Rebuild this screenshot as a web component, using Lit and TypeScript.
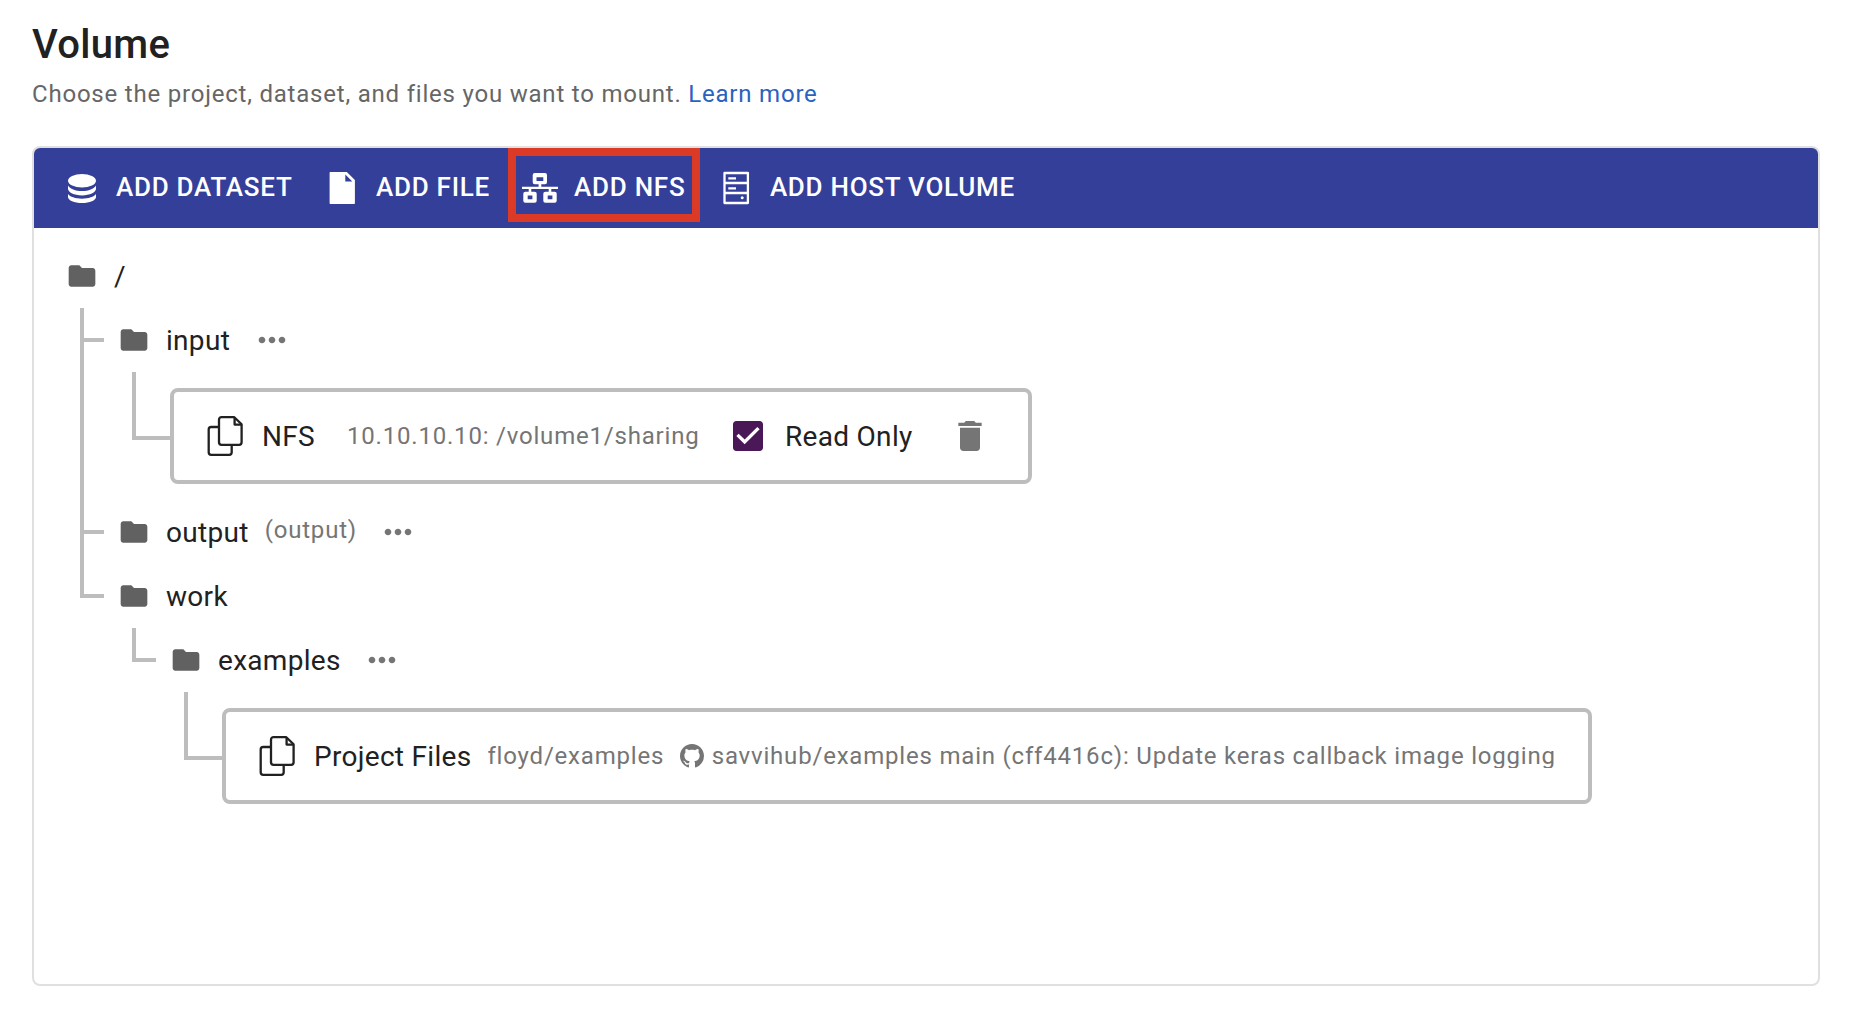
import { LitElement, html, css, svg, nothing, type TemplateResult } from "lit";
import { customElement } from "lit/decorators.js";
import { classMap } from "lit/directives/class-map.js";

interface FileCard {
  kind: "card";
  body: TemplateResult;
}
interface Folder {
  kind: "folder";
  name: string;
  note?: string;
  menu?: boolean;
  children?: TreeNode[];
}
type TreeNode = FileCard | Folder;

const datasetIcon = svg`<svg class="tool-icon" viewBox="0 0 36 36"><ellipse cx="18" cy="10.7" rx="14" ry="6.8"/><path d="M4 15.4C6 18.9 11.4 21 18 21s12-2.1 14-5.6v3.4c0 3.7-6.3 6.6-14 6.6S4 22.5 4 18.8z"/><path d="M4 24.1C6 26.9 11.4 28.7 18 28.7s12-1.8 14-4.6v3c0 3.4-6.3 6-14 6s-14-2.6-14-6z"/></svg>`;

const fileIcon = svg`<svg class="tool-icon" viewBox="0 0 36 36"><path fill-rule="evenodd" d="M6.3 2H22.8L30.9 10V33.2a.7.7 0 0 1-.7.7H6.3a.7.7 0 0 1-.7-.7V2.7a.7.7 0 0 1 .7-.7zM21.3 4.600V11.600H28.300z"/></svg>`;

const nfsIcon = svg`<svg class="tool-icon" viewBox="0 0 36 36"><path fill-rule="evenodd" d="M12.700 3H23a2 2 0 0 1 2 2v7.300a2 2 0 0 1-2 2H12.700a2 2 0 0 1-2-2V5a2 2 0 0 1 2-2zM14.500 7.300V11h6.800V7.300z"/><path d="M16.600 14h2.700v3h-2.700zM0 16.700h36v2.300H0zM6.700 18.500h2.600v3.500H6.700zM26.700 18.500h2.600v3.500h-2.600z"/><path fill-rule="evenodd" d="M3.300 21.700h9.400a2 2 0 0 1 2 2v7a2 2 0 0 1-2 2H3.300a2 2 0 0 1-2-2v-7a2 2 0 0 1 2-2zM5.700 25.500V29.200h4.700V25.500zM23.300 21.700h9.400a2 2 0 0 1 2 2v7a2 2 0 0 1-2 2h-9.400a2 2 0 0 1-2-2v-7a2 2 0 0 1 2-2zM25.700 25.500V29.200h4.700V25.500z"/></svg>`;

const hostIcon = svg`<svg class="tool-icon" viewBox="0 0 36 36"><path fill="none" stroke="currentColor" stroke-width="2.3" stroke-linejoin="round" d="M6.500 3H29.900V33H6.500zM6.500 13H29.900M6.500 23H29.900"/><path d="M10.300 7.200h7.700v2.200h-7.700zM10.300 17.200h7.700v2.200h-7.700z"/><circle cx="24.200" cy="27.800" r="1.500"/></svg>`;

const folderIcon = svg`<svg class="folder-icon" viewBox="0 0 24 24"><path d="M10 4H4c-1.100 0-1.990.9-1.990 2L2 18c0 1.100.9 2 2 2h16c1.100 0 2-.9 2-2V8c0-1.100-.9-2-2-2h-8l-2-2z"/></svg>`;

const moreIcon = svg`<svg class="glyph" viewBox="0 0 24 24"><path d="M6 10c-1.100 0-2 .9-2 2s.9 2 2 2 2-.9 2-2-.9-2-2-2zm12 0c-1.100 0-2 .9-2 2s.9 2 2 2 2-.9 2-2-.9-2-2-2zm-6 0c-1.100 0-2 .9-2 2s.9 2 2 2 2-.9 2-2-.9-2-2-2z"/></svg>`;

const copyIcon = svg`<svg class="copy-icon" viewBox="0 0 36 40"><g fill="none" stroke="currentColor" stroke-width="2.3" stroke-linejoin="round"><path d="M11.500 11H4.200a2.500 2.500 0 0 0-2.500 2.500V36.300a2.500 2.500 0 0 0 2.500 2.500H22.200a2.500 2.500 0 0 0 2.500-2.500V29.500"/><path d="M14.500 1.200H27.300L34.600 8.300V26.300a2.500 2.500 0 0 1-2.500 2.500H14.500a2.500 2.500 0 0 1-2.500-2.500V3.700A2.500 2.500 0 0 1 14.500 1.200z"/><path d="M27.600 1.800V8.600H34.200"/></g></svg>`;

const checkIcon = svg`<svg class="check" viewBox="0 0 24 24"><path d="M19 3H5c-1.110 0-2 .9-2 2v14c0 1.100.89 2 2 2h14c1.110 0 2-.9 2-2V5c0-1.100-.89-2-2-2zm-9 14l-5-5 1.410-1.410L10 14.170l7.590-7.590L19 8l-9 9z"/></svg>`;

const trashIcon = svg`<svg class="glyph" viewBox="0 0 24 24"><path d="M6 19c0 1.100.9 2 2 2h8c1.100 0 2-.9 2-2V7H6v12zM19 4h-3.500l-1-1h-5l-1 1H5v2h14V4z"/></svg>`;

const githubIcon = svg`<svg class="github" viewBox="0 0 16 16"><path d="M8 0C3.580 0 0 3.580 0 8c0 3.540 2.290 6.530 5.470 7.590.4.070.55-.17.55-.38 0-.19-.01-.82-.01-1.490-2.010.37-2.530-.49-2.690-.94-.09-.23-.48-.94-.82-1.130-.28-.15-.68-.52-.01-.53.63-.01 1.080.58 1.230.82.72 1.210 1.870.87 2.330.66.07-.52.28-.87.51-1.070-1.780-.2-3.640-.89-3.640-3.950 0-.87.31-1.590.82-2.150-.08-.2-.36-1.020.08-2.120 0 0 .67-.21 2.200.82.64-.18 1.320-.27 2-.27s1.360.09 2 .27c1.530-1.040 2.200-.82 2.200-.82.44 1.100.16 1.920.08 2.120.51.56.82 1.270.82 2.150 0 3.070-1.870 3.750-3.650 3.950.29.25.54.73.54 1.480 0 1.070-.01 1.930-.01 2.200 0 .21.15.46.55.38A8.013 8.013 0 0 0 16 8c0-4.420-3.580-8-8-8z"/></svg>`;

const actions = [
  { label: "ADD DATASET", icon: datasetIcon },
  { label: "ADD FILE", icon: fileIcon },
  { label: "ADD NFS", icon: nfsIcon, marked: true },
  { label: "ADD HOST VOLUME", icon: hostIcon },
];

const nfsCard: FileCard = {
  kind: "card",
  body: html`
    ${copyIcon}
    <span class="body">NFS</span>
    <span class="caption address">10.10.10.10: /volume1/sharing</span>
    ${checkIcon}
    <span class="body read-only">Read Only</span>
    <span class="delete">${trashIcon}</span>
  `,
};

const projectCard: FileCard = {
  kind: "card",
  body: html`
    ${copyIcon}
    <span class="body">Project Files</span>
    <span class="caption source">floyd/examples</span>
    ${githubIcon}
    <span class="caption">savvihub/examples main (cff4416c): </span>
    <span class="caption message">Update keras callback image logging</span>
  `,
};

const root: Folder = {
  kind: "folder",
  name: "/",
  children: [
    { kind: "folder", name: "input", menu: true, children: [nfsCard] },
    { kind: "folder", name: "output", note: "(output)", menu: true },
    {
      kind: "folder",
      name: "work",
      children: [{ kind: "folder", name: "examples", menu: true, children: [projectCard] }],
    },
  ],
};

@customElement("app-root")
export class AppRoot extends LitElement {
  static styles = css`
    :host {
      display: block;
      box-sizing: border-box;
      height: 1012px;
      padding: 16px 34px 26px 32px;
      background: #fff;
      color: #212121;
      font-family: Roboto, "Liberation Sans", sans-serif;
    }
    * {
      box-sizing: border-box;
    }
    svg {
      display: block;
      flex: none;
      fill: currentColor;
    }
    .title {
      margin: 0;
      font-size: 40px;
      font-weight: 500;
      line-height: 58px;
      letter-spacing: 0.3px;
    }
    .subtitle {
      margin: 0 0 32px;
      font-size: 24px;
      line-height: 40px;
      letter-spacing: 0.79px;
      color: #666;
    }
    .link {
      color: #2962bf;
      text-decoration: none;
    }
    .panel {
      height: 840px;
      border: 2px solid #e0e0e0;
      border-radius: 8px;
      overflow: hidden;
    }
    .toolbar {
      display: flex;
      gap: 32px;
      height: 80px;
      padding-left: 30px;
      background: #343f99;
      color: #fff;
    }
    .action {
      position: relative;
      display: flex;
      align-items: center;
      gap: 16px;
      font-size: 26px;
      font-weight: 500;
      line-height: 40px;
      letter-spacing: 0.743px;
      white-space: nowrap;
    }
    .action:first-child {
      margin-right: -0.6px;
    }
    .action:nth-child(3) {
      margin-right: 0.5px;
    }
    .action-label {
      padding-bottom: 2px;
    }
    .marker {
      position: absolute;
      left: -14px;
      top: 0;
      width: 192px;
      height: 74px;
      border: 8px solid #db3b26;
    }
    .tool-icon {
      width: 36px;
      height: 36px;
    }
    .tree {
      padding: 16px 32px;
    }
    .row {
      display: flex;
      align-items: center;
      height: 64px;
    }
    .folder-icon {
      width: 32px;
      height: 32px;
      margin-right: 16px;
      color: #616161;
    }
    .body {
      padding-top: 2px;
      font-size: 28px;
      line-height: 40px;
      letter-spacing: 0.3px;
      white-space: nowrap;
    }
    .caption {
      font-size: 24px;
      line-height: 40px;
      letter-spacing: 0.8px;
      white-space: pre;
      color: #757575;
    }
    .note {
      margin: 0 -0.8px 0 16px;
      padding-bottom: 5px;
    }
    .glyph {
      width: 40px;
      height: 40px;
      color: #757575;
    }
    .menu {
      margin-left: 21.5px;
    }
    .children {
      padding-left: 14px;
    }
    .child {
      display: flex;
    }
    .rail {
      display: flex;
      flex-direction: column;
      flex: none;
      width: 24px;
      margin-right: 14px;
    }
    .elbow {
      flex: none;
      height: 34px;
      border-left: 4px solid #bdbdbd;
      border-bottom: 4px solid #bdbdbd;
    }
    .stem {
      flex: 1;
      border-left: 4px solid #bdbdbd;
    }
    .rail-card {
      width: 38px;
      margin-right: 0;
    }
    .rail-card .elbow {
      height: 68px;
    }
    .card {
      display: flex;
      align-items: center;
      height: 96px;
      margin: 16px 0;
      padding-left: 33px;
      padding-right: 32px;
      border: 4px solid #bdbdbd;
      border-radius: 8px;
    }
    .copy-icon {
      width: 36px;
      height: 40px;
      margin-right: 19px;
    }
    .address {
      margin: 0 28.5px 0 32px;
    }
    .check {
      width: 40px;
      height: 40px;
      color: #4a1857;
    }
    .read-only {
      margin: 0 37.5px 0 17px;
    }
    .delete {
      margin-right: 6px;
    }
    .source {
      margin: 0 15.6px 0 16px;
    }
    .github {
      width: 24px;
      height: 24px;
      margin-right: 8px;
      color: #757575;
    }
    .message {
      line-height: 24px;
      overflow: hidden;
    }
  `;

  private renderFolder(folder: Folder): TemplateResult {
    return html`
      <div class="folder">
        <div class="row">
          ${folderIcon}
          <span class="body">${folder.name}</span>
          ${folder.note ? html`<span class="caption note">${folder.note}</span>` : nothing}
          ${folder.menu ? html`<span class="menu">${moreIcon}</span>` : nothing}
        </div>
        ${folder.children
          ? html`<div class="children">
              ${folder.children.map((node, i) => this.renderChild(node, i === folder.children!.length - 1))}
            </div>`
          : nothing}
      </div>
    `;
  }

  private renderChild(node: TreeNode, last: boolean): TemplateResult {
    return html`
      <div class="child">
        <div class=${classMap({ rail: true, "rail-card": node.kind === "card" })}>
          <div class="elbow"></div>
          ${last ? nothing : html`<div class="stem"></div>`}
        </div>
        ${node.kind === "card" ? html`<div class="card">${node.body}</div>` : this.renderFolder(node)}
      </div>
    `;
  }

  render() {
    return html`
      <h1 class="title">Volume</h1>
      <p class="subtitle">
        Choose the project, dataset, and files you want to mount. <a class="link">Learn more</a>
      </p>
      <section class="panel">
        <div class="toolbar">
          ${actions.map(
            (a) => html`<div class="action">
              ${a.icon}<span class="action-label">${a.label}</span>
              ${a.marked ? html`<div class="marker"></div>` : nothing}
            </div>`,
          )}
        </div>
        <div class="tree">${this.renderFolder(root)}</div>
      </section>
    `;
  }
}
